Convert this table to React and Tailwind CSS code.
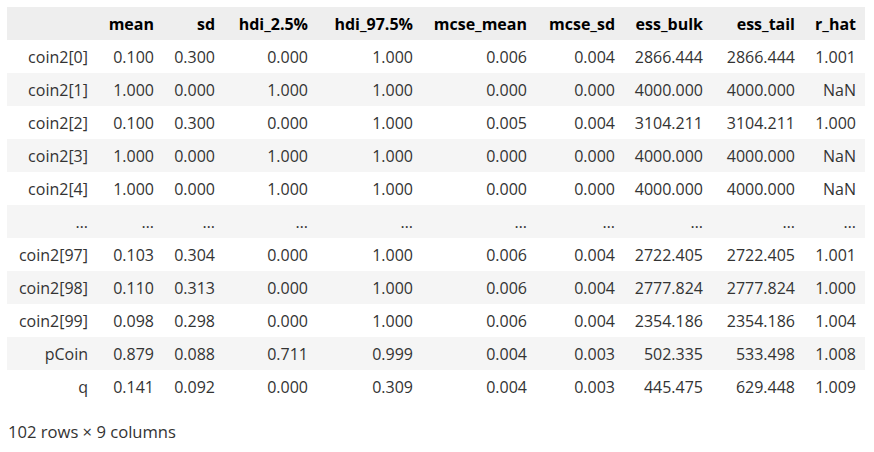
import React from "react";

const columns = ["mean", "sd", "hdi_2.5%", "hdi_97.5%", "mcse_mean", "mcse_sd", "ess_bulk", "ess_tail", "r_hat"];

const rows = [
  ["coin2[0]", "0.100", "0.300", "0.000", "1.000", "0.006", "0.004", "2866.444", "2866.444", "1.001"],
  ["coin2[1]", "1.000", "0.000", "1.000", "1.000", "0.000", "0.000", "4000.000", "4000.000", "NaN"],
  ["coin2[2]", "0.100", "0.300", "0.000", "1.000", "0.005", "0.004", "3104.211", "3104.211", "1.000"],
  ["coin2[3]", "1.000", "0.000", "1.000", "1.000", "0.000", "0.000", "4000.000", "4000.000", "NaN"],
  ["coin2[4]", "1.000", "0.000", "1.000", "1.000", "0.000", "0.000", "4000.000", "4000.000", "NaN"],
  ["...", "...", "...", "...", "...", "...", "...", "...", "...", "..."],
  ["coin2[97]", "0.103", "0.304", "0.000", "1.000", "0.006", "0.004", "2722.405", "2722.405", "1.001"],
  ["coin2[98]", "0.110", "0.313", "0.000", "1.000", "0.006", "0.004", "2777.824", "2777.824", "1.000"],
  ["coin2[99]", "0.098", "0.298", "0.000", "1.000", "0.006", "0.004", "2354.186", "2354.186", "1.004"],
  ["pCoin", "0.879", "0.088", "0.711", "0.999", "0.004", "0.003", "502.335", "533.498", "1.008"],
  ["q", "0.141", "0.092", "0.000", "0.309", "0.004", "0.003", "445.475", "629.448", "1.009"],
];

const widths = ["w-[90px]", "w-[66px]", "w-[61px]", "w-[93px]", "w-[105px]", "w-[114px]", "w-[88px]", "w-[88px]", "w-[92px]", "w-[61px]"];

export default function App() {
  return (
    <div className="bg-white w-[874px] h-[452px] pt-[7px] pl-[7px] font-['Open_Sans',sans-serif] text-[16px] text-[#333]">
      <table className="table-fixed border-collapse w-[858px]">
        <colgroup>
          {widths.map((w, i) => (
            <col key={i} className={w} />
          ))}
        </colgroup>
        <thead>
          <tr className="bg-[#eeeeee] h-[33px]">
            <th className="px-[9px]"></th>
            {columns.map((c) => (
              <th key={c} className="px-[9px] text-right font-bold text-black whitespace-nowrap">
                {c}
              </th>
            ))}
          </tr>
        </thead>
        <tbody>
          {rows.map((r, i) => (
            <tr key={i} className={`h-[33px] ${i % 2 === 1 ? "bg-[#f5f5f5]" : "bg-white"}`}>
              {r.map((v, j) => (
                <td key={j} className="px-[9px] text-right whitespace-nowrap">
                  {v === "..." ? "…" : v}
                </td>
              ))}
            </tr>
          ))}
        </tbody>
      </table>
      <p className="mt-[17px] pl-px leading-6 text-[16.6px] text-[#333]">102 rows × 9 columns</p>
    </div>
  );
}
